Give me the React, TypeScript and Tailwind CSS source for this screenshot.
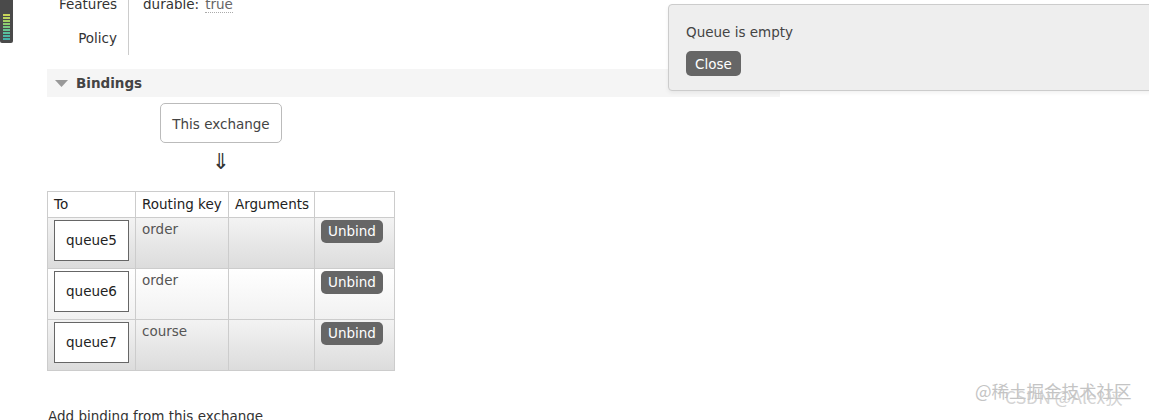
import React from "react";

const rows = [
  { q: "queue5", key: "order", alt: false },
  { q: "queue6", key: "order", alt: true },
  { q: "queue7", key: "course", alt: false },
];

export default function App() {
  return (
    <div className="relative w-[1149px] h-[420px] overflow-hidden bg-white text-[13.5px] text-[#333] font-['DejaVu_Sans','Noto_Sans_CJK_SC',sans-serif]">
      {/* left decoration */}
      <div className="absolute left-0 top-0 w-[13px] h-[43px] rounded-b-[2px] bg-[#4a4a4a] flex flex-col justify-end gap-[1px] px-[3px] pb-[3px]">
        {["#c8d45a", "#b8d45e", "#a4d264", "#8ecf70", "#78cb80", "#66c690", "#58c09c", "#4cb8a4", "#44b0a8"].map((c, i) => (
          <div key={i} className="h-[2px] w-full" style={{ background: c }} />
        ))}
      </div>

      <div className="pl-[47px] flex flex-col">
        {/* info rows */}
        <div className="-mt-[13px] flex">
          <div className="w-[82px] border-r border-[#ccc] flex flex-col items-end pr-[11px]">
            <div className="h-[35px] flex items-center">Features</div>
            <div className="h-[33px] flex items-center">Policy</div>
          </div>
          <div className="pl-[14px] flex flex-col">
            <div className="h-[35px] flex items-center gap-[6px]">
              <span>durable:</span>
              <span className="text-[#666] border-b border-dotted border-[#aaa] leading-[15px]">true</span>
            </div>
          </div>
        </div>

        {/* Bindings header */}
        <div className="mt-[14px] w-[733px] h-[28px] bg-[#f5f5f5] flex items-center pl-[8px]">
          <svg width="13" height="8" viewBox="0 0 13 8" className="mt-[1px]">
            <polygon points="0,0 13,0 6.5,7" fill="#999" />
          </svg>
          <span className="ml-[8px] font-bold text-[#444]">Bindings</span>
        </div>

        {/* This exchange */}
        <div className="ml-[113px] mt-[6px] w-[122px] h-[40px] border border-[#bbb] rounded-[5px] flex items-center justify-center text-[#444] pt-[2px]">
          This exchange
        </div>
        <div className="ml-[113px] w-[122px] h-[36px] flex items-center justify-center text-[22px] text-[#333] leading-none pt-[2px]">
          ⇓
        </div>

        {/* table */}
        <div className="mt-[12px] w-[348px] border border-[#ccc] flex flex-col">
          <div className="flex h-[25px] bg-white text-[#222]">
            <div className="w-[88px] border-r border-[#ccc] pl-[6px] flex items-center">To</div>
            <div className="w-[93px] border-r border-[#ccc] pl-[6px] flex items-center">Routing key</div>
            <div className="w-[86px] border-r border-[#ccc] pl-[6px] flex items-center">Arguments</div>
            <div className="flex-1" />
          </div>
          {rows.map((r) => (
            <div
              key={r.q}
              className={`flex h-[51px] border-t border-[#ccc] ${
                r.alt ? "bg-gradient-to-b from-[#ffffff] to-[#f1f1f1]" : "bg-gradient-to-b from-[#f3f3f3] to-[#dcdcdc]"
              }`}
            >
              <div className="w-[88px] border-r border-[#ccc] pl-[6px] pt-[2px]">
                <div className="w-[75px] h-[41px] bg-white border border-[#666] flex items-center justify-center text-[#222]">
                  {r.q}
                </div>
              </div>
              <div className="w-[93px] border-r border-[#ccc] pl-[6px] pt-[1px] text-[#555]">{r.key}</div>
              <div className="w-[86px] border-r border-[#ccc]" />
              <div className="flex-1 pl-[6px] pt-[2px]">
                <div className="w-[62px] h-[23px] rounded-[5px] bg-[#666] text-white flex items-center justify-center">
                  Unbind
                </div>
              </div>
            </div>
          ))}
        </div>

        <div className="mt-[35px] pl-[1px] text-[#333]">Add binding from this exchange</div>
      </div>

      {/* popup */}
      <div className="absolute left-[668px] top-[4px] w-[500px] h-[87px] bg-[#eeeeee] border border-[#ccc] rounded-[4px] shadow-[0_2px_4px_rgba(0,0,0,0.06)] pl-[17px] pt-[17px]">
        <div className="text-[#444]">Queue is empty</div>
        <div className="mt-[9px] w-[55px] h-[25px] rounded-[5px] bg-[#666] text-white flex items-center justify-center">
          Close
        </div>
      </div>

      {/* watermark */}
      <div className="absolute left-[975px] top-[382px] text-[17.5px] text-[#c4c4c4] leading-none font-['Noto_Sans_CJK_SC',sans-serif]">
        @稀土掘金技术社区
      </div>
      <div className="absolute left-[1005px] top-[388px] text-[17.5px] text-[#c8c8c8]/80 leading-none font-['Noto_Sans_CJK_SC',sans-serif]">
        CSDN @Alex狭
      </div>
    </div>
  );
}
